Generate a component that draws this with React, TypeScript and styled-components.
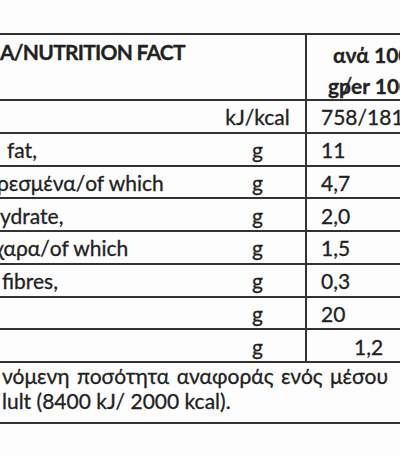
import styled, { createGlobalStyle } from "styled-components";

const GlobalStyle = createGlobalStyle`
  html, body {
    margin: 0;
    padding: 0;
    background: #fdfdfd;
  }
  body {
    font-family: Lato, "Noto Sans", sans-serif;
    color: #222;
    -webkit-text-stroke: 0.3px #222;
  }
`;

const Page = styled.div`
  width: 400px;
  height: 457px;
  overflow: hidden;
  padding-top: 33px;
  box-sizing: border-box;
`;

const Table = styled.div`
  width: 420px;
  font-size: 21px;
`;

const Row = styled.div<{ $h: number; $top?: boolean }>`
  display: grid;
  grid-template-columns: 210px 95px 1fr;
  height: ${(p) => p.$h}px;
  box-sizing: border-box;
  border-top: ${(p) => (p.$top ? "2px solid #333" : "none")};
  border-bottom: 2px solid #333;
`;

const NameCell = styled.div<{ $indent?: number; $bold?: boolean }>`
  display: flex;
  align-items: ${(p) => (p.$bold ? "flex-start" : "center")};
  padding-top: ${(p) => (p.$bold ? "4px" : "1px")};
  margin-left: ${(p) => p.$indent ?? 0}px;
  font-weight: ${(p) => (p.$bold ? 700 : 400)};
  letter-spacing: ${(p) => (p.$bold ? "-0.75px" : "0")};
  white-space: nowrap;
`;

const UnitCell = styled.div`
  display: flex;
  align-items: center;
  justify-content: center;
  padding-top: 1px;
`;

const ValueCell = styled.div<{ $indent?: number }>`
  display: flex;
  align-items: center;
  padding-top: 1px;
  padding-left: ${(p) => p.$indent ?? 14}px;
  border-left: 2px solid #333;
  white-space: nowrap;
`;

const HeadValue = styled.div`
  display: flex;
  flex-direction: column;
  padding: 4px 0 0 26px;
  border-left: 2px solid #333;
  font-weight: 700;
  line-height: 31px;
  white-space: nowrap;
`;

const HeadSecond = styled.span`
  margin-left: -5px;
`;

const Struck = styled.span`
  position: relative;
  &::after {
    content: "/";
    position: absolute;
    left: 3px;
    top: -3px;
    font-weight: 400;
    font-size: 23px;
  }
`;

const Footnote = styled.div`
  width: 400px;
  box-sizing: border-box;
  padding: 0 12px 0 2px;
  border-bottom: 2px solid #333;
  font-size: 21px;
  line-height: 25px;
  height: 61px;
`;

const JustLine = styled.div`
  text-align: justify;
  text-align-last: justify;
`;

const rows = [
  { name: "", indent: 0, unit: "kJ/kcal", value: "758/181" },
  { name: "fat,", indent: 7, unit: "g", value: "11" },
  { name: "ρεσμένα/of which", indent: -3, unit: "g", value: "4,7" },
  { name: "ydrate,", indent: 0, unit: "g", value: "2,0" },
  { name: "χαρα/of which", indent: -6, unit: "g", value: "1,5" },
  { name: "fibres,", indent: 2, unit: "g", value: "0,3" },
  { name: "", indent: 0, unit: "g", value: "20" },
  { name: "", indent: 0, unit: "g", value: "1,2", vIndent: 47 },
];

export default function App() {
  return (
    <>
      <GlobalStyle />
      <Page>
        <Table>
          <Row $h={68} $top>
            <NameCell $bold>A/NUTRITION FACT</NameCell>
            <UnitCell />
            <HeadValue>
              <span>ανά 100</span>
              <HeadSecond>
                g<Struck>p</Struck>er 100
              </HeadSecond>
            </HeadValue>
          </Row>
          {rows.map((r, i) => (
            <Row key={i} $h={32.75}>
              <NameCell $indent={r.indent}>{r.name}</NameCell>
              <UnitCell>{r.unit}</UnitCell>
              <ValueCell $indent={r.vIndent}>{r.value}</ValueCell>
            </Row>
          ))}
        </Table>
        <Footnote>
          <JustLine>νόμενη ποσότητα αναφοράς ενός μέσου</JustLine>
          <div>lult (8400 kJ/ 2000 kcal).</div>
        </Footnote>
      </Page>
    </>
  );
}
